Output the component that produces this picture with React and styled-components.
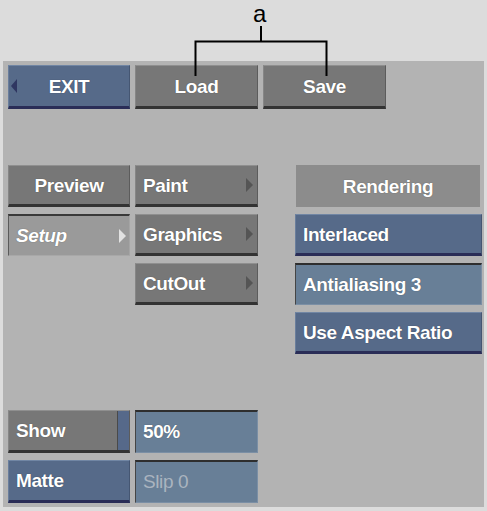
import React from 'react';
import styled, { createGlobalStyle, css } from 'styled-components';

const Global = createGlobalStyle`
  html, body { margin: 0; padding: 0; background: #dcdcdc; }
  body {
    font-family: "Liberation Sans", Arial, Helvetica, sans-serif;
    width: 487px; height: 511px; overflow: hidden;
  }
  * { box-sizing: border-box; }
`;

const Page = styled.div`
  position: relative;
  width: 487px;
  height: 511px;
`;

const Header = styled.div`
  height: 61px;
`;

const Callout = styled.svg`
  position: absolute;
  left: 0;
  top: 0;
  pointer-events: none;
  z-index: 2;
`;

const CalloutLetter = styled.span`
  position: absolute;
  left: 253px;
  top: 0px;
  font-family: "Liberation Sans", Arial, sans-serif;
  font-size: 24px;
  line-height: 28px;
  color: #000;
  z-index: 2;
`;

const Panel = styled.div`
  margin-left: 3px;
  width: 481px;
  height: 446px;
  background: #b3b3b3;
  padding: 4px 0 0 5px;
  display: flex;
  flex-direction: column;
`;

const TopRow = styled.div`
  display: flex;
  gap: 5px;
`;

const Middle = styled.div`
  display: flex;
  margin-top: 56px;
`;

const LeftGrid = styled.div`
  display: grid;
  grid-template-columns: 122px 123px;
  grid-auto-rows: 42px;
  column-gap: 5px;
  row-gap: 7px;
`;

const RightCol = styled.div`
  display: grid;
  grid-template-columns: 187px;
  grid-auto-rows: 42px;
  row-gap: 7px;
  margin-left: 37px;
`;

const Bottom = styled.div`
  display: grid;
  grid-template-columns: 122px 123px;
  grid-auto-rows: 43px;
  column-gap: 5px;
  row-gap: 7px;
  margin-top: 56px;
`;

const variants = {
  gray: css`
    background: #777777;
    border-top: 1px solid #8f8f8f;
    border-left: 1px solid #868686;
    border-right: 1px solid #5c5c5c;
    border-bottom: 3px solid #333333;
  `,
  blue: css`
    background: #566a89;
    border-top: 1px solid #7186a4;
    border-left: 1px solid #6a7e9c;
    border-right: 1px solid #455672;
    border-bottom: 3px solid #2a2d57;
  `,
  pressed: css`
    background: #9a9a9a;
    border-top: 2px solid #393939;
    border-left: 1px solid #5a5a5a;
    border-right: 1px solid #a5a5a5;
    border-bottom: 1px solid #a8a8a8;
  `,
  field: css`
    background: #687f97;
    border-top: 2px solid #2e2e2e;
    border-left: 1px solid #454545;
    border-right: 1px solid #7b8fa5;
    border-bottom: 1px solid #7b8fa5;
  `,
  label: css`
    background: #8c8c8c;
    border: none;
  `,
};

const Button = styled.div`
  position: relative;
  display: flex;
  align-items: center;
  justify-content: ${p => (p.$center ? 'center' : 'flex-start')};
  padding-left: ${p => (p.$center ? '0' : '7px')};
  padding-top: ${p => (p.$variant === 'field' || p.$variant === 'pressed' ? '0' : '1px')};
  width: ${p => p.$w || 'auto'};
  height: 100%;
  margin: ${p => p.$m || '0'};
  color: ${p => (p.$dim ? '#aab4bf' : '#ffffff')};
  font-family: "Liberation Sans", Arial, sans-serif;
  font-size: 19px;
  font-weight: ${p => (p.$dim ? 400 : 700)};
  font-style: ${p => (p.$italic ? 'italic' : 'normal')};
  letter-spacing: -0.4px;
  text-shadow: ${p => (p.$dim ? 'none' : '0 0 1px rgba(0,0,0,0.45)')};
  white-space: nowrap;
  overflow: hidden;
  ${p => variants[p.$variant || 'gray']}
`;

const TopButton = styled(Button)`
  height: 44px;
`;

const ArrowRight = styled.span`
  position: absolute;
  right: ${p => p.$right || '4px'};
  top: 50%;
  transform: translateY(-50%);
  width: 0;
  height: 0;
  border-top: 7px solid transparent;
  border-bottom: 7px solid transparent;
  border-left: 7px solid ${p => p.$color || '#555555'};
`;

const ArrowLeft = styled.span`
  position: absolute;
  left: 2px;
  top: 50%;
  transform: translateY(-50%);
  width: 0;
  height: 0;
  border-top: 7px solid transparent;
  border-bottom: 7px solid transparent;
  border-right: 6px solid #2f3661;
`;

const ToggleStrip = styled.span`
  position: absolute;
  right: -1px;
  top: -1px;
  bottom: -3px;
  width: 13px;
  background: #56698a;
  border-top: 1px solid #7387a6;
  border-left: 1px solid #4a4a4a;
  border-bottom: 3px solid #2a2d57;
`;

export default function App() {
  return (
    <Page>
      <Global />
      <Callout width="487" height="90" viewBox="0 0 487 90">
        <path d="M261 26 V41 M195.5 76 V41.5 H326.5 V76" fill="none" stroke="#000" strokeWidth="2" />
      </Callout>
      <CalloutLetter>a</CalloutLetter>
      <Header />
      <Panel>
        <TopRow>
          <TopButton $variant="blue" $center $w="122px">
            <ArrowLeft />
            EXIT
          </TopButton>
          <TopButton $variant="gray" $center $w="123px">Load</TopButton>
          <TopButton $variant="gray" $center $w="123px">Save</TopButton>
        </TopRow>

        <Middle>
          <LeftGrid>
            <Button $variant="gray" $center>Preview</Button>
            <Button $variant="gray">
              Paint
              <ArrowRight />
            </Button>
            <Button $variant="pressed" $italic>
              Setup
              <ArrowRight $color="#e2e2e2" $right="3px" />
            </Button>
            <Button $variant="gray">
              Graphics
              <ArrowRight />
            </Button>
            <span />
            <Button $variant="gray">
              CutOut
              <ArrowRight />
            </Button>
          </LeftGrid>
          <RightCol>
            <Button $variant="label" $center $w="184px" $m="0 0 0 1px">Rendering</Button>
            <Button $variant="blue">Interlaced</Button>
            <Button $variant="field">Antialiasing 3</Button>
            <Button $variant="blue">Use Aspect Ratio</Button>
          </RightCol>
        </Middle>

        <Bottom>
          <Button $variant="gray">
            Show
            <ToggleStrip />
          </Button>
          <Button $variant="field">50%</Button>
          <Button $variant="blue">Matte</Button>
          <Button $variant="field" $dim>Slip 0</Button>
        </Bottom>
      </Panel>
    </Page>
  );
}
